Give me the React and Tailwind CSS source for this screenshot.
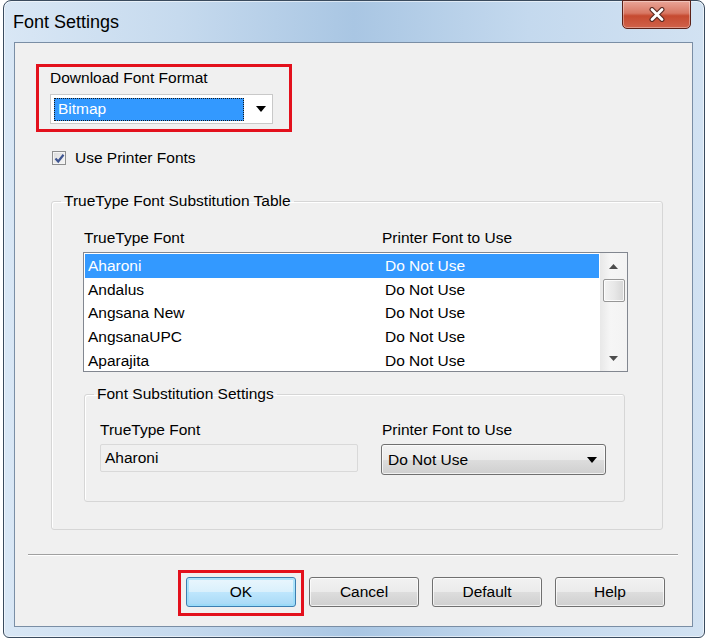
const FONT = { fontFamily: '"Liberation Sans", Arial, sans-serif' };

const rows = ["Aharoni", "Andalus", "Angsana New", "AngsanaUPC", "Aparajita"];

function DownArrow({ className = "" }) {
  return (
    <svg width="10" height="6" viewBox="0 0 10 6" className={className}>
      <path d="M0 0 L10 0 L5 6 Z" fill="#000" />
    </svg>
  );
}

function Button({ label, focused }) {
  return (
    <div
      className={`w-[110px] h-[30px] rounded-[3px] border flex items-center justify-center text-[15.5px] leading-[18px] text-black ${
        focused
          ? "border-[#3c7fb1] bg-[linear-gradient(180deg,#eaf6fd_0%,#d9f0fc_50%,#bee6fd_51%,#a7d9f5_100%)] shadow-[inset_0_0_0_2px_rgba(150,220,250,0.7)]"
          : "border-[#707070] bg-[linear-gradient(180deg,#f2f2f2_0%,#ebebeb_50%,#dddddd_51%,#cfcfcf_100%)] shadow-[inset_0_0_0_1px_rgba(255,255,255,0.7)]"
      }`}
    >
      {label}
    </div>
  );
}

export default function App() {
  return (
    <div className="w-[706px] h-[639px] bg-white" style={FONT}>
      <div className="ml-[3px] w-[702px] h-[638px] border border-[#3a4b5e] rounded-t-[8px] rounded-b-[6px] bg-[linear-gradient(90deg,#d9e7f5_0%,#c6daee_25%,#a9c6e3_50%,#c4d9ee_75%,#d2e2f2_100%)] shadow-[inset_0_0_0_1px_rgba(255,255,255,0.55)] flex flex-col">
        {/* title bar */}
        <div className="h-[41px] flex items-start justify-between">
          <div className="pl-[9px] pt-[10px] text-[18px] leading-[22px] text-black">
            Font Settings
          </div>
          <div className="mt-[-1px] mr-[13px] w-[69px] h-[29px] rounded-b-[5px] border border-[#5b2118] bg-[linear-gradient(180deg,#e9a598_0%,#d87763_45%,#c64a30_55%,#d0624a_100%)] shadow-[inset_0_0_0_1px_rgba(255,255,255,0.35)] flex items-center justify-center">
            <svg width="18" height="15" viewBox="0 0 18 15">
              <path d="M4 2.5 L14 12.5 M14 2.5 L4 12.5" stroke="#5a2a22" strokeWidth="5" strokeLinecap="round" />
              <path d="M4 2.5 L14 12.5 M14 2.5 L4 12.5" stroke="#ffffff" strokeWidth="2.8" strokeLinecap="round" />
            </svg>
          </div>
        </div>

        {/* content frame */}
        <div className="ml-[10px] mr-[11px] mb-[10px] flex-1 border border-[#7a8ea5] bg-[#f0f0f0] pl-[21px] pt-[21px] text-[15.5px] leading-[18px] text-black">
          {/* download font format */}
          <div className="w-[256px] h-[68px] border-[3px] border-[#e3101c] pl-[11px] pt-[2px]">
            <div>Download Font Format</div>
            <div className="mt-[7px] w-[223px] h-[30px] border border-[#c9c9c9] bg-white flex items-center pl-[3px] pr-[4px]">
              <div className="w-[190px] h-[23px] bg-[#3399ff] outline-1 outline-dotted outline-[#1a1a1a] -outline-offset-1 text-white pl-[4px] flex items-center">
                Bitmap
              </div>
              <div className="flex-1 flex justify-end pr-[2px]">
                <DownArrow />
              </div>
            </div>
          </div>

          {/* use printer fonts */}
          <div className="mt-[17px] ml-[16px] h-[18px] flex items-center gap-[9px]">
            <div className="w-[14px] h-[14px] border border-[#8e8f8f] bg-[linear-gradient(135deg,#dcdcdc_0%,#f6f6f6_100%)] shadow-[inset_0_0_0_1px_#f4f4f4] flex items-center justify-center">
              <svg width="11" height="11" viewBox="0 0 11 11">
                <path d="M1.5 5.5 L4.2 8.5 L9.5 1.8" stroke="#3f5590" strokeWidth="2.2" fill="none" />
              </svg>
            </div>
            <span>Use Printer Fonts</span>
          </div>

          {/* substitution table group */}
          <fieldset className="mt-[25px] ml-[15px] w-[612px] border border-[#d6d6d6] rounded-[3px] pt-[19px] pb-[27px] shadow-[inset_1px_1px_0_#ffffff]">
            <legend className="ml-[9px] px-[3px]">TrueType Font Substitution Table</legend>

            <div className="pl-[32px] grid grid-cols-[298px_1fr]">
              <div>TrueType Font</div>
              <div>Printer Font to Use</div>
            </div>

            <div className="mt-[5px] ml-[31px] w-[545px] h-[120px] border border-[#828790] bg-white flex overflow-hidden">
              <div className="flex-1 pl-[1px] pt-[1px] pr-[1px]">
                {rows.map((name, i) => (
                  <div
                    key={name}
                    className={`h-[23.75px] grid grid-cols-[297px_1fr] items-center pl-[3px] ${
                      i === 0 ? "bg-[#3399ff] text-white" : "text-black"
                    }`}
                  >
                    <span>{name}</span>
                    <span>Do Not Use</span>
                  </div>
                ))}
              </div>
              <div className="w-[27px] bg-[linear-gradient(90deg,#e8e8e8_0%,#f6f6f6_40%,#f3f3f3_100%)] flex flex-col items-center">
                <div className="h-[26px] flex items-center justify-center">
                  <svg width="9" height="5" viewBox="0 0 9 5">
                    <path d="M0 5 L4.5 0 L9 5 Z" fill="#4d4d4d" />
                  </svg>
                </div>
                <div className="w-[22px] h-[23px] rounded-[2px] border border-[#979797] bg-[linear-gradient(90deg,#f2f2f2_0%,#e8e8e8_50%,#d6d6d6_100%)] shadow-[inset_0_0_0_1px_rgba(255,255,255,0.8)]" />
                <div className="flex-1" />
                <div className="h-[26px] flex items-center justify-center">
                  <svg width="9" height="5" viewBox="0 0 9 5">
                    <path d="M0 0 L9 0 L4.5 5 Z" fill="#4d4d4d" />
                  </svg>
                </div>
              </div>
            </div>

            {/* inner settings group */}
            <fieldset className="mt-[13px] ml-[32px] w-[541px] border border-[#d6d6d6] rounded-[3px] pt-[18px] pb-[26px] shadow-[inset_1px_1px_0_#ffffff]">
              <legend className="ml-[9px] px-[3px]">Font Substitution Settings</legend>
              <div className="pl-[15px] grid grid-cols-[281px_1fr]">
                <div className="flex flex-col">
                  <div>TrueType Font</div>
                  <div className="mt-[5px] w-[258px] h-[28px] border border-[#d9d9d9] rounded-[2px] bg-[#f0f0f0] flex items-center pl-[4px]">
                    Aharoni
                  </div>
                </div>
                <div className="flex flex-col">
                  <div className="pl-[1px]">Printer Font to Use</div>
                  <div className="mt-[5px] w-[225px] h-[31px] border border-[#707070] rounded-[3px] bg-[linear-gradient(180deg,#f2f2f2_0%,#ebebeb_50%,#dddddd_51%,#cfcfcf_100%)] shadow-[inset_0_0_0_1px_rgba(255,255,255,0.7)] flex items-center justify-between pl-[6px] pr-[8px]">
                    <span>Do Not Use</span>
                    <DownArrow />
                  </div>
                </div>
              </div>
            </fieldset>
          </fieldset>

          {/* separator */}
          <div className="mt-[24px] ml-[-8px] w-[650px] h-[2px] border-t border-[#a0a0a0] border-b border-b-white" />

          {/* buttons */}
          <div className="mt-[14px] ml-[142px] flex items-start">
            <div className="w-[126px] h-[46px] border-[3px] border-[#e3101c] pl-[5px] pt-[4px]">
              <Button label="OK" focused />
            </div>
            <div className="ml-[5px] mt-[7px] flex gap-[13px]">
              <Button label="Cancel" />
              <Button label="Default" />
              <Button label="Help" />
            </div>
          </div>
        </div>
      </div>
    </div>
  );
}
